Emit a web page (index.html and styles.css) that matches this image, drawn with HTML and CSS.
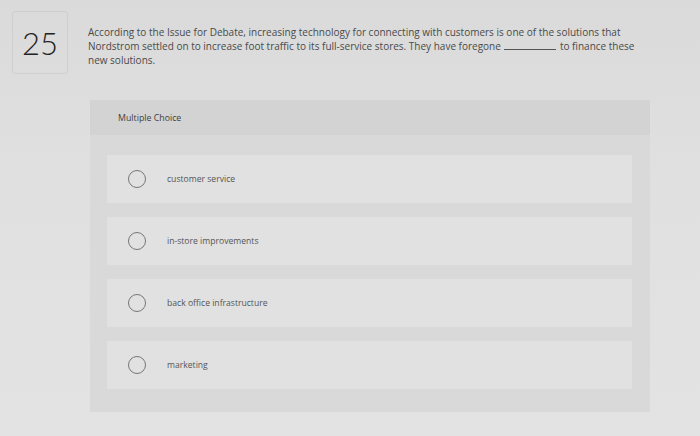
FILE: index.html
```html
<!DOCTYPE html>
<html>
<head>
<meta charset="utf-8">
<link rel="stylesheet" href="styles.css">
</head>
<body>
<div class="page">
  <div class="question">
    <div class="qnum">25</div>
    <p class="qtext">According to the Issue for Debate, increasing technology for connecting with customers is one of the solutions that Nordstrom settled on to increase foot traffic to its full-service stores. They have foregone<span class="blank"></span>to finance these new solutions.</p>
  </div>
  <div class="panel">
    <div class="panel-head">Multiple Choice</div>
    <div class="options">
      <div class="option"><span class="radio"></span><span class="label">customer service</span></div>
      <div class="option"><span class="radio"></span><span class="label">in-store improvements</span></div>
      <div class="option"><span class="radio"></span><span class="label">back office infrastructure</span></div>
      <div class="option"><span class="radio"></span><span class="label">marketing</span></div>
    </div>
  </div>
</div>
</body>
</html>
```

FILE: styles.css
```css
html, body {
  margin: 0;
  padding: 0;
}
body {
  width: 700px;
  height: 436px;
  overflow: hidden;
  background: linear-gradient(180deg, #dadada 0%, #e0e0e0 40%, #e3e3e3 100%);
  font-family: "Open Sans", "Liberation Sans", sans-serif;
  color: #444;
}
.page {
  padding: 11px 0 0 12px;
}
.question {
  display: flex;
  align-items: flex-start;
}
.qnum {
  width: 54px;
  height: 61px;
  border: 1px solid #cfcfcf;
  border-radius: 3px;
  display: flex;
  align-items: center;
  justify-content: center;
  font-family: "Lato", sans-serif;
  font-weight: 300;
  font-size: 31px;
  color: #222;
  flex: none;
}
.qtext {
  margin: 14px 0 0 20px;
  width: 550px;
  font-size: 10px;
  line-height: 14px;
  color: #4a4a4a;
}
.blank {
  display: inline-block;
  width: 52px;
  height: 9px;
  border-bottom: 1px solid #555;
  margin: 0 4px 0 3px;
  vertical-align: baseline;
}
.panel {
  margin: 26px 0 0 78px;
  width: 560px;
  height: 312px;
  background: #d9d9d9;
}
.panel-head {
  height: 35px;
  background: #d3d3d3;
  padding-left: 28px;
  display: flex;
  align-items: center;
  font-size: 8.8px;
  color: #3f3f3f;
}
.options {
  padding: 20px 18px 0 17px;
  display: flex;
  flex-direction: column;
  gap: 14px;
}
.option {
  height: 48px;
  background: #e1e1e1;
  display: flex;
  align-items: center;
  padding-left: 21px;
}
.radio {
  width: 16px;
  height: 16px;
  border: 1.3px solid #777;
  border-radius: 50%;
  flex: none;
}
.label {
  margin-left: 21px;
  font-size: 8.6px;
  color: #555;
}
```
